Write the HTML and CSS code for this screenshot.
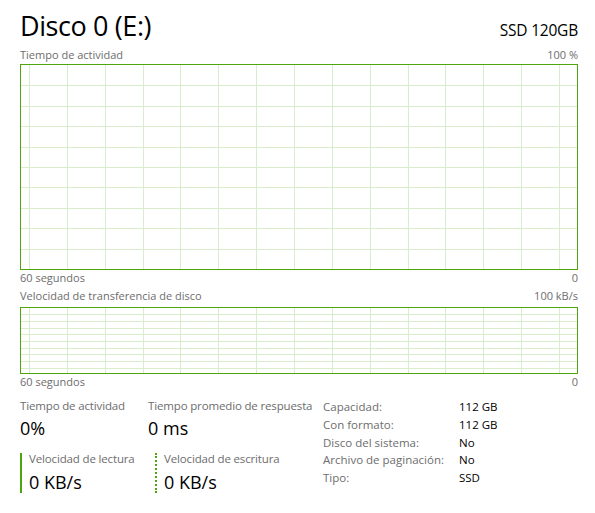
FILE: index.html
```html
<!DOCTYPE html>
<html lang="es">
<head>
<meta charset="utf-8">
<title>Disco 0 (E:)</title>
<link rel="stylesheet" href="styles.css">
</head>
<body>
<div class="page">
  <div class="header">
    <div class="title">Disco 0 (E:)</div>
    <div class="model">SSD 120GB</div>
  </div>
  <div class="caption top-cap">
    <span>Tiempo de actividad</span>
    <span>100 %</span>
  </div>
  <div class="graph graph-big">
    <svg class="grid" width="556" height="204" viewBox="0 0 556 204">
      <g stroke="#d9edcc" stroke-width="1">
        <path d="M8.5 0V204M46.5 0V204M84.5 0V204M122.5 0V204M159.5 0V204M197.5 0V204M235.5 0V204M273.5 0V204M311.5 0V204M349.5 0V204M387.5 0V204M424.5 0V204M462.5 0V204M500.5 0V204M538.5 0V204"/>
        <path d="M0 20.5H556M0 41.5H556M0 61.5H556M0 82.5H556M0 102.5H556M0 122.5H556M0 143.5H556M0 163.5H556M0 184.5H556"/>
      </g>
    </svg>
  </div>
  <div class="caption">
    <span>60 segundos</span>
    <span>0</span>
  </div>
  <div class="caption second-cap">
    <span>Velocidad de transferencia de disco</span>
    <span>100 kB/s</span>
  </div>
  <div class="graph graph-small">
    <svg class="grid" width="556" height="65" viewBox="0 0 556 65">
      <g stroke="#d9edcc" stroke-width="1">
        <path d="M8.5 0V65M46.5 0V65M84.5 0V65M122.5 0V65M159.5 0V65M197.5 0V65M235.5 0V65M273.5 0V65M311.5 0V65M349.5 0V65M387.5 0V65M424.5 0V65M462.5 0V65M500.5 0V65M538.5 0V65"/>
        <path d="M0 6.5H556M0 13.5H556M0 20.5H556M0 26.5H556M0 33.5H556M0 40.5H556M0 46.5H556M0 53.5H556M0 60.5H556"/>
      </g>
    </svg>
  </div>
  <div class="caption">
    <span>60 segundos</span>
    <span>0</span>
  </div>

  <div class="stats">
    <div class="stats-left">
      <div class="stat-row">
        <div class="stat stat-a">
          <div class="stat-label">Tiempo de actividad</div>
          <div class="stat-value">0%</div>
        </div>
        <div class="stat">
          <div class="stat-label">Tiempo promedio de respuesta</div>
          <div class="stat-value">0 ms</div>
        </div>
      </div>
      <div class="stat-row">
        <div class="stat stat-b read">
          <div class="stat-label">Velocidad de lectura</div>
          <div class="stat-value">0 KB/s</div>
        </div>
        <div class="stat stat-b write">
          <div class="stat-label">Velocidad de escritura</div>
          <div class="stat-value">0 KB/s</div>
        </div>
      </div>
    </div>
    <div class="props">
      <div class="prop-key">Capacidad:</div><div class="prop-val">112 GB</div>
      <div class="prop-key">Con formato:</div><div class="prop-val">112 GB</div>
      <div class="prop-key">Disco del sistema:</div><div class="prop-val">No</div>
      <div class="prop-key">Archivo de paginación:</div><div class="prop-val">No</div>
      <div class="prop-key">Tipo:</div><div class="prop-val">SSD</div>
    </div>
  </div>
</div>
</body>
</html>
```

FILE: styles.css
```css
html, body {
  margin: 0;
  padding: 0;
  background: #ffffff;
}

body {
  font-family: "Open Sans", "Noto Sans", sans-serif;
  color: #000000;
}

.page {
  width: 558px;
  padding: 6px 0 0 20px;
  display: flex;
  flex-direction: column;
}

.header {
  display: flex;
  justify-content: space-between;
  align-items: baseline;
  height: 41px;
}

.title {
  font-size: 27px;
  line-height: 40px;
  letter-spacing: -0.4px;
}

.model {
  font-size: 15.5px;
  letter-spacing: -0.2px;
}

.caption {
  display: flex;
  justify-content: space-between;
  font-size: 11px;
  line-height: 16px;
  color: #6d6d6d;
}

.top-cap {
  height: 17px;
}

.second-cap {
  margin-top: 2px;
  height: 19px;
}

.graph {
  box-sizing: border-box;
  border: 1px solid #4da60c;
  background-color: #ffffff;
  overflow: hidden;
}

.grid {
  display: block;
}

.graph-big {
  height: 206px;
}

.graph-small {
  height: 67px;
}

.stats {
  display: flex;
  margin-top: 8px;
}

.stats-left {
  width: 303px;
  display: flex;
  flex-direction: column;
}

.stat-row {
  display: flex;
}

.stat-a {
  width: 128px;
}

.stat-label {
  font-size: 11.5px;
  line-height: 16px;
  color: #6d6d6d;
  letter-spacing: -0.15px;
}

.stat-value {
  font-size: 18px;
  line-height: 28px;
}

.stat-b {
  box-sizing: border-box;
  margin-top: 11px;
  padding-left: 7px;
  height: 40px;
}

.stat-b .stat-label {
  line-height: 12px;
}

.stat-b .stat-value {
  line-height: 34px;
}

.read {
  width: 135px;
  border-left: 2px solid #4da60c;
}

.write {
  border-left: 2px dotted #4da60c;
}

.props {
  display: grid;
  grid-template-columns: 136px auto;
  grid-auto-rows: 17.75px;
  font-size: 11.5px;
  line-height: 17.75px;
}

.prop-key {
  color: #6d6d6d;
}

.prop-val {
  color: #000000;
}
```
